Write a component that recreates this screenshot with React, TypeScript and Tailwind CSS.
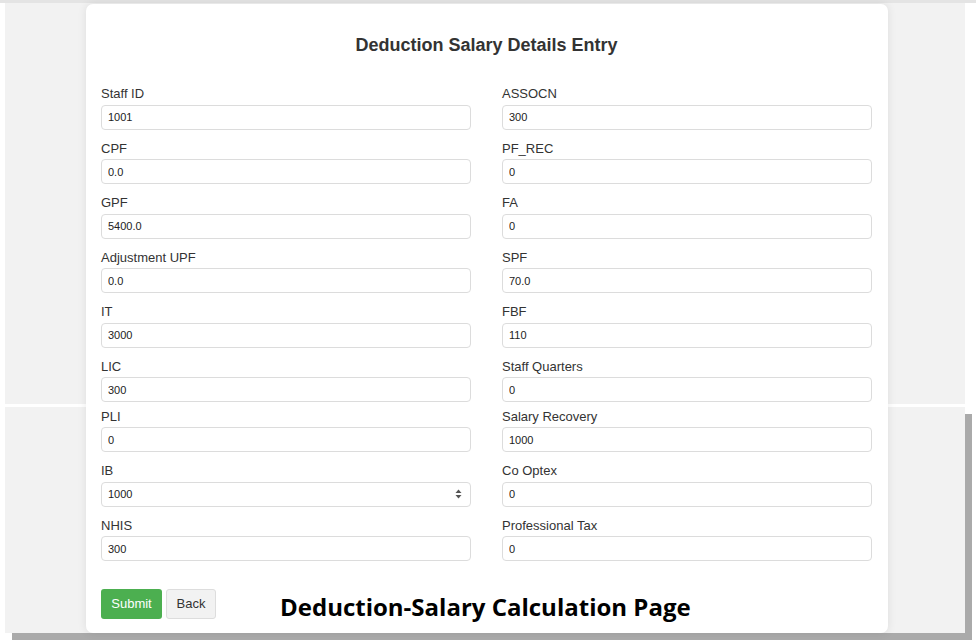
import React from "react";

const left: [string, string][] = [
  ["Staff ID", "1001"],
  ["CPF", "0.0"],
  ["GPF", "5400.0"],
  ["Adjustment UPF", "0.0"],
  ["IT", "3000"],
  ["LIC", "300"],
  ["PLI", "0"],
  ["IB", "1000"],
  ["NHIS", "300"],
];
const right: [string, string][] = [
  ["ASSOCN", "300"],
  ["PF_REC", "0"],
  ["FA", "0"],
  ["SPF", "70.0"],
  ["FBF", "110"],
  ["Staff Quarters", "0"],
  ["Salary Recovery", "1000"],
  ["Co Optex", "0"],
  ["Professional Tax", "0"],
];

function Field({ label, value, spinner }: { label: string; value: string; spinner?: boolean }) {
  return (
    <div className="flex flex-col">
      <label className="h-[15px] mb-[3px] text-[13px] leading-[15px] text-[#333]">{label}</label>
      <div className="relative h-[25px]">
        <input
          readOnly
          defaultValue={value}
          className="w-full h-[25px] border border-[#dcdcdc] rounded-[4px] pl-[6px] text-[11px] text-[#222] bg-white outline-none"
          style={{ fontFamily: '"Liberation Sans", Arial, sans-serif' }}
        />
        {spinner && (
          <svg className="absolute right-[9px] top-[8px]" width="7" height="10" viewBox="0 0 7 10">
            <path d="M3.5 0.5 L6.5 4 L0.5 4 Z" fill="#555" />
            <path d="M3.5 9.5 L6.5 6 L0.5 6 Z" fill="#555" />
          </svg>
        )}
      </div>
    </div>
  );
}

export default function App() {
  const top = [0, 1, 2, 3, 4, 5];
  const bottom = [6, 7, 8];
  return (
    <div
      className="w-[976px] h-[640px] bg-white overflow-hidden"
      style={{ fontFamily: '"Liberation Sans", Arial, sans-serif' }}
    >
      <div className="h-[3px] bg-[#e4e4e4]" />
      <div className="grid">
        <div className="[grid-area:1/1] flex flex-col pl-[5px]">
          <div className="w-[960px] h-[401px] bg-[#f2f2f2]" />
          <div className="h-[3px]" />
          <div className="w-[960px] h-[226px] bg-[#f2f2f2] shadow-[7px_7px_0_#aaaaaa]" />
        </div>
        <div className="[grid-area:1/1] ml-[86px] mt-[1px] w-[802px] h-[629px] bg-white rounded-[7px] shadow-[0_0_10px_rgba(0,0,0,0.09)] pt-[30px] pl-[15px] pr-[16px]">
          <h1 className="text-center text-[18px] leading-[22px] font-bold text-[#333]">
            Deduction Salary Details Entry
          </h1>
          <div className="mt-[30px] grid grid-cols-2 gap-x-[31px] gap-y-[11.5px]">
            {top.map((i) => (
              <React.Fragment key={i}>
                <Field label={left[i][0]} value={left[i][1]} />
                <Field label={right[i][0]} value={right[i][1]} />
              </React.Fragment>
            ))}
          </div>
          <div className="mt-[7px] grid grid-cols-2 gap-x-[31px] gap-y-[11.5px]">
            {bottom.map((i) => (
              <React.Fragment key={i}>
                <Field label={left[i][0]} value={left[i][1]} spinner={i === 7} />
                <Field label={right[i][0]} value={right[i][1]} />
              </React.Fragment>
            ))}
          </div>
          <div className="mt-[28px] flex items-start">
            <button className="w-[61px] h-[30px] bg-[#4caf50] text-white text-[13px] leading-[30px] rounded-[3px]">Submit</button>
            <button className="ml-[4px] w-[50px] h-[30px] bg-[#f2f2f2] border border-[#dddddd] text-[#333] text-[13px] leading-[28px] rounded-[3px]">
              Back
            </button>
            <div
              className="ml-[64px] mt-[5px] text-[24px] leading-[25px] font-bold text-black whitespace-nowrap"
              style={{ fontFamily: '"Open Sans", sans-serif' }}
            >
              Deduction-Salary Calculation Page
            </div>
          </div>
        </div>
      </div>
    </div>
  );
}
